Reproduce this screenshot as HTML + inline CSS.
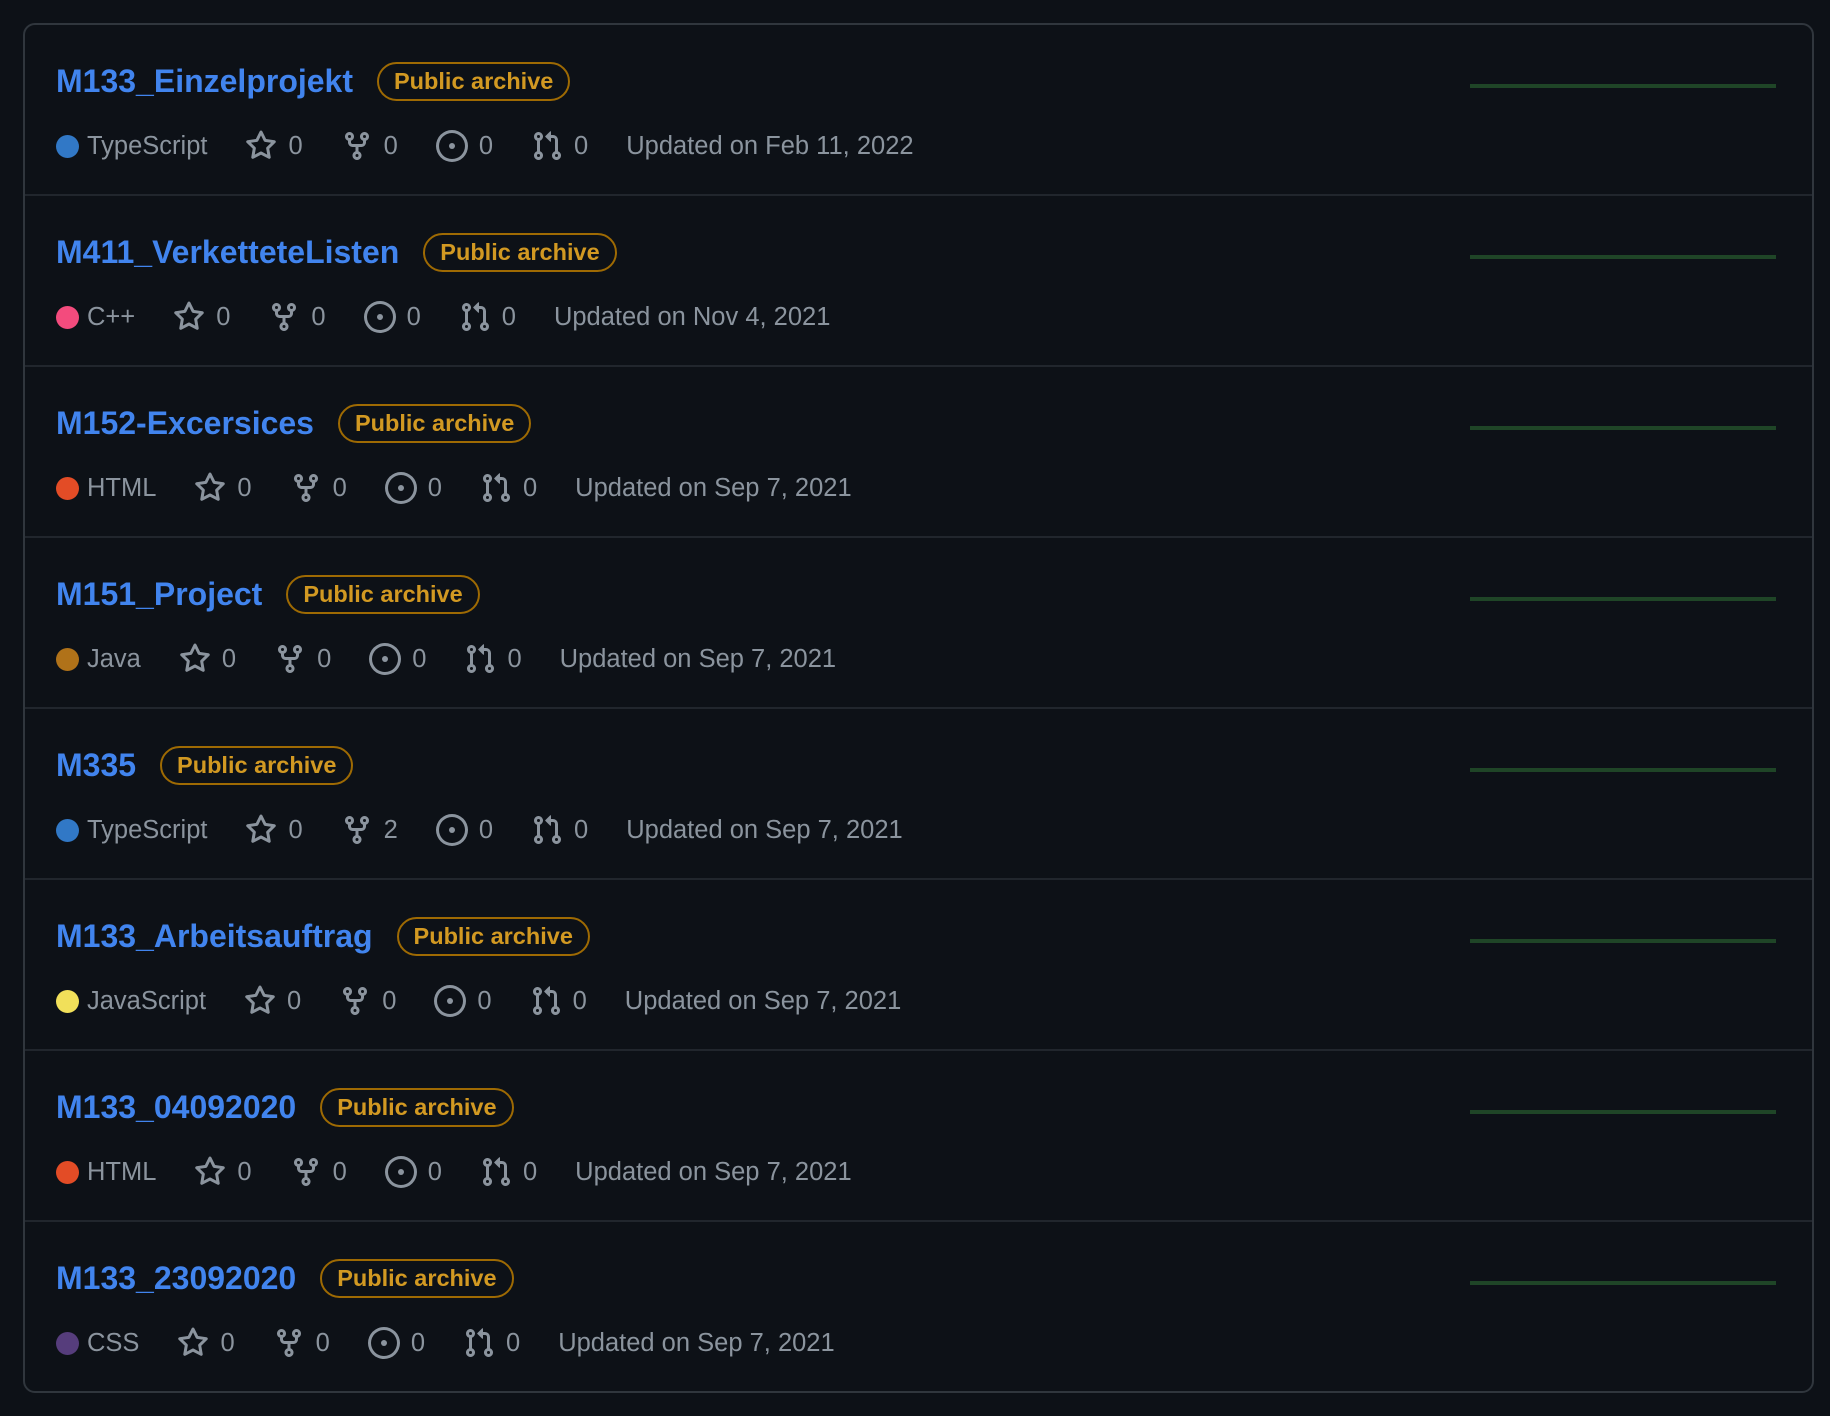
<!DOCTYPE html>
<html><head><meta charset="utf-8"><style>
*{margin:0;padding:0;box-sizing:border-box}
body{width:1830px;height:1416px;background:#0d1117;font-family:"Liberation Sans",Arial,sans-serif;position:relative;overflow:hidden}
.box{position:absolute;left:23px;top:23px;width:1791px;height:1370px;border:2px solid #30363d;border-radius:12px}
.row{position:absolute;left:0;width:1787px;height:171px;border-bottom:2px solid #21262d}
.row.last{border-bottom:none}
.title{position:absolute;left:31px;top:36px;height:40px;font-size:32px;font-weight:bold;color:#4184ee;white-space:nowrap;display:flex;align-items:center}
.badge{margin-left:24px;font-size:23.5px;font-weight:bold;color:#d29922;border:2px solid #9e6a03;border-radius:20px;height:39px;padding:0 15px;display:inline-flex;align-items:center}
.meta{position:absolute;left:31px;top:104px;height:34px;display:flex;align-items:center;font-size:25.5px;color:#8b949e;white-space:nowrap}
.dot{width:23px;height:23px;border-radius:50%;margin-right:8px}
.it{display:inline-flex;align-items:center;margin-right:38px}
.it svg{width:32px;height:32px;margin-right:11px;fill:#8b949e}
.line{position:absolute;left:1445px;top:59px;width:306px;height:4px;background:#1f4527}
</style></head><body>
<svg width="0" height="0" style="position:absolute">
<defs>
<symbol id="star" viewBox="0 0 16 16"><path d="M8 .25a.75.75 0 0 1 .673.418l1.882 3.815 4.21.612a.75.75 0 0 1 .416 1.279l-3.046 2.97.719 4.192a.751.751 0 0 1-1.088.791L8 12.347l-3.766 1.98a.75.75 0 0 1-1.088-.79l.72-4.194L.818 6.374a.75.75 0 0 1 .416-1.28l4.21-.611L7.327.668A.75.75 0 0 1 8 .25Zm0 2.445L6.615 5.5a.75.75 0 0 1-.564.41l-3.097.45 2.24 2.184a.75.75 0 0 1 .216.664l-.528 3.084 2.769-1.456a.75.75 0 0 1 .698 0l2.77 1.456-.53-3.084a.75.75 0 0 1 .216-.664l2.24-2.183-3.096-.45a.75.75 0 0 1-.564-.41L8 2.694Z"/></symbol>
<symbol id="fork" viewBox="0 0 16 16"><path d="M5 5.372v.878c0 .414.336.75.75.75h4.5a.75.75 0 0 0 .75-.75v-.878a2.25 2.25 0 1 1 1.5 0v.878a2.25 2.25 0 0 1-2.25 2.25h-1.5v2.128a2.251 2.251 0 1 1-1.5 0V8.5h-1.5A2.250 2.25 0 0 1 3.5 6.25v-.878a2.25 2.25 0 1 1 1.5 0ZM5 3.25a.75.75 0 1 0-1.5 0 .75.75 0 0 0 1.5 0Zm6.75.75a.75.75 0 1 0 0-1.5.75.75 0 0 0 0 1.5Zm-3 8.75a.75.75 0 1 0-1.5 0 .75.75 0 0 0 1.5 0Z"/></symbol>
<symbol id="issue" viewBox="0 0 16 16"><path d="M8 9.5a1.5 1.5 0 1 0 0-3 1.5 1.5 0 0 0 0 3Z"/><path d="M8 0a8 8 0 1 1 0 16A8 8 0 0 1 8 0ZM1.5 8a6.5 6.5 0 1 0 13 0 6.5 6.5 0 0 0-13 0Z"/></symbol>
<symbol id="pr" viewBox="0 0 16 16"><path d="M1.5 3.25a2.25 2.25 0 1 1 3 2.122v5.256a2.251 2.251 0 1 1-1.5 0V5.372A2.25 2.25 0 0 1 1.5 3.25Zm5.677-.177L9.573.677A.25.25 0 0 1 10 .854V2.5h1A2.5 2.5 0 0 1 13.5 5v5.628a2.251 2.251 0 1 1-1.5 0V5a1 1 0 0 0-1-1h-1v1.646a.25.25 0 0 1-.427.177L7.177 3.427a.25.25 0 0 1 0-.354ZM3.75 2.5a.75.75 0 1 0 0 1.5.75.75 0 0 0 0-1.5Zm0 9.5a.75.75 0 1 0 0 1.5.75.75 0 0 0 0-1.5Zm8.25.75a.75.75 0 1 0 1.5 0 .75.75 0 0 0-1.5 0Z"/></symbol>
</defs></svg>
<div class="box">

<div class="row" style="top:0">
<div class="title">M133_Einzelprojekt<span class="badge">Public archive</span></div>
<div class="meta"><span class="it"><span class="dot" style="background:#3178c6"></span>TypeScript</span><span class="it"><svg><use href="#star"/></svg>0</span><span class="it"><svg><use href="#fork"/></svg>0</span><span class="it"><svg><use href="#issue"/></svg>0</span><span class="it"><svg><use href="#pr"/></svg>0</span><span>Updated on Feb 11, 2022</span></div>
<div class="line"></div></div>

<div class="row" style="top:171px">
<div class="title">M411_VerketteteListen<span class="badge">Public archive</span></div>
<div class="meta"><span class="it"><span class="dot" style="background:#f34b7d"></span>C++</span><span class="it"><svg><use href="#star"/></svg>0</span><span class="it"><svg><use href="#fork"/></svg>0</span><span class="it"><svg><use href="#issue"/></svg>0</span><span class="it"><svg><use href="#pr"/></svg>0</span><span>Updated on Nov 4, 2021</span></div>
<div class="line"></div></div>

<div class="row" style="top:342px">
<div class="title">M152-Excersices<span class="badge">Public archive</span></div>
<div class="meta"><span class="it"><span class="dot" style="background:#e34c26"></span>HTML</span><span class="it"><svg><use href="#star"/></svg>0</span><span class="it"><svg><use href="#fork"/></svg>0</span><span class="it"><svg><use href="#issue"/></svg>0</span><span class="it"><svg><use href="#pr"/></svg>0</span><span>Updated on Sep 7, 2021</span></div>
<div class="line"></div></div>

<div class="row" style="top:513px">
<div class="title">M151_Project<span class="badge">Public archive</span></div>
<div class="meta"><span class="it"><span class="dot" style="background:#b07219"></span>Java</span><span class="it"><svg><use href="#star"/></svg>0</span><span class="it"><svg><use href="#fork"/></svg>0</span><span class="it"><svg><use href="#issue"/></svg>0</span><span class="it"><svg><use href="#pr"/></svg>0</span><span>Updated on Sep 7, 2021</span></div>
<div class="line"></div></div>

<div class="row" style="top:684px">
<div class="title">M335<span class="badge">Public archive</span></div>
<div class="meta"><span class="it"><span class="dot" style="background:#3178c6"></span>TypeScript</span><span class="it"><svg><use href="#star"/></svg>0</span><span class="it"><svg><use href="#fork"/></svg>2</span><span class="it"><svg><use href="#issue"/></svg>0</span><span class="it"><svg><use href="#pr"/></svg>0</span><span>Updated on Sep 7, 2021</span></div>
<div class="line"></div></div>

<div class="row" style="top:855px">
<div class="title">M133_Arbeitsauftrag<span class="badge">Public archive</span></div>
<div class="meta"><span class="it"><span class="dot" style="background:#f1e05a"></span>JavaScript</span><span class="it"><svg><use href="#star"/></svg>0</span><span class="it"><svg><use href="#fork"/></svg>0</span><span class="it"><svg><use href="#issue"/></svg>0</span><span class="it"><svg><use href="#pr"/></svg>0</span><span>Updated on Sep 7, 2021</span></div>
<div class="line"></div></div>

<div class="row" style="top:1026px">
<div class="title">M133_04092020<span class="badge">Public archive</span></div>
<div class="meta"><span class="it"><span class="dot" style="background:#e34c26"></span>HTML</span><span class="it"><svg><use href="#star"/></svg>0</span><span class="it"><svg><use href="#fork"/></svg>0</span><span class="it"><svg><use href="#issue"/></svg>0</span><span class="it"><svg><use href="#pr"/></svg>0</span><span>Updated on Sep 7, 2021</span></div>
<div class="line"></div></div>

<div class="row last" style="top:1197px">
<div class="title">M133_23092020<span class="badge">Public archive</span></div>
<div class="meta"><span class="it"><span class="dot" style="background:#563d7c"></span>CSS</span><span class="it"><svg><use href="#star"/></svg>0</span><span class="it"><svg><use href="#fork"/></svg>0</span><span class="it"><svg><use href="#issue"/></svg>0</span><span class="it"><svg><use href="#pr"/></svg>0</span><span>Updated on Sep 7, 2021</span></div>
<div class="line"></div></div>

</div>
</body></html>
